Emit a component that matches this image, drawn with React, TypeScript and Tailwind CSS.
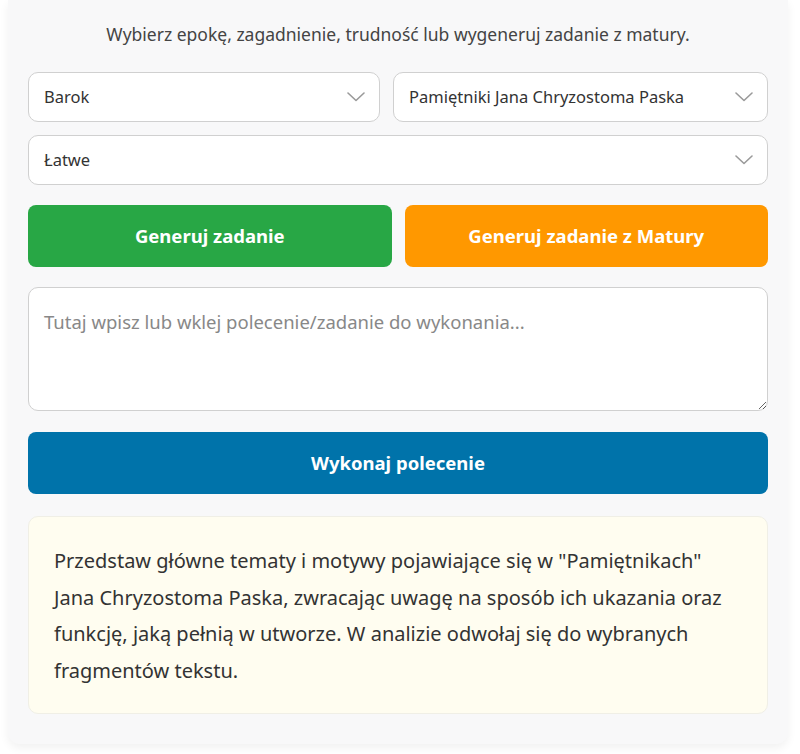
import { useState } from "react";

const FONT = "font-['Noto_Sans','Open_Sans',sans-serif]";

function Chevron() {
  return (
    <svg width="18" height="10" viewBox="0 0 18 10" fill="none" className="shrink-0">
      <polyline points="1,1 9,8.5 17,1" stroke="#9a9a9a" strokeWidth="1.6" strokeLinecap="round" strokeLinejoin="round" />
    </svg>
  );
}

function FakeSelect({ value, className }: { value: string; className: string }) {
  return (
    <div className={`flex h-[50px] items-center justify-between rounded-[10px] border border-[#d0d0d0] bg-white pl-[15px] pr-[14px] text-[16.5px] text-[#333] ${className}`}>
      <span>{value}</span>
      <Chevron />
    </div>
  );
}

export default function App() {
  const [task, setTask] = useState("");

  return (
    <div className={`min-h-[754px] bg-white ${FONT}`}>
      <div className="mx-2 w-[780px] rounded-b-[12px] bg-[#f8f8f9] px-5 pb-[30px] pt-[21px] shadow-[0_4px_10px_rgba(0,0,0,0.06)]">
        <p className="mb-[25px] text-center text-[17.5px] text-[#444]">
          Wybierz epokę, zagadnienie, trudność lub wygeneruj zadanie z matury.
        </p>

        <div className="flex gap-[13px]">
          <FakeSelect value="Barok" className="w-[352px]" />
          <FakeSelect value="Pamiętniki Jana Chryzostoma Paska" className="flex-1" />
        </div>

        <div className="mt-[13px] flex">
          <FakeSelect value="Łatwe" className="flex-1" />
        </div>

        <div className="mt-[20px] flex gap-[13px]">
          <button className="h-[62px] flex-1 rounded-[8px] bg-[#28a745] text-[18.5px] font-bold text-white">
            Generuj zadanie
          </button>
          <button className="h-[62px] flex-1 rounded-[8px] bg-[#ff9800] text-[18.5px] font-bold text-white">
            Generuj zadanie z Matury
          </button>
        </div>

        <textarea
          value={task}
          onChange={(e) => setTask(e.target.value)}
          placeholder="Tutaj wpisz lub wklej polecenie/zadanie do wykonania..."
          className="mt-[20px] block h-[124px] w-full rounded-[10px] border border-[#d0d0d0] bg-white px-[15px] py-[20px] text-[18.5px] text-[#333] placeholder:text-[#888] outline-none"
        />

        <button className="mt-[21px] h-[62px] w-full rounded-[8px] bg-[#0073aa] text-[18.5px] font-bold text-white">
          Wykonaj polecenie
        </button>

        <div className="mt-[22px] rounded-[10px] border border-[#f0efe6] bg-[#fffdf0] px-[25px] pb-[24px] pt-[26px] text-[20px] leading-[36.5px] text-[#333]">
          Przedstaw główne tematy i motywy pojawiające się w "Pamiętnikach" Jana Chryzostoma Paska, zwracając uwagę na sposób ich ukazania oraz funkcję, jaką pełnią w utworze. W analizie odwołaj się do wybranych fragmentów tekstu.
        </div>
      </div>
    </div>
  );
}
